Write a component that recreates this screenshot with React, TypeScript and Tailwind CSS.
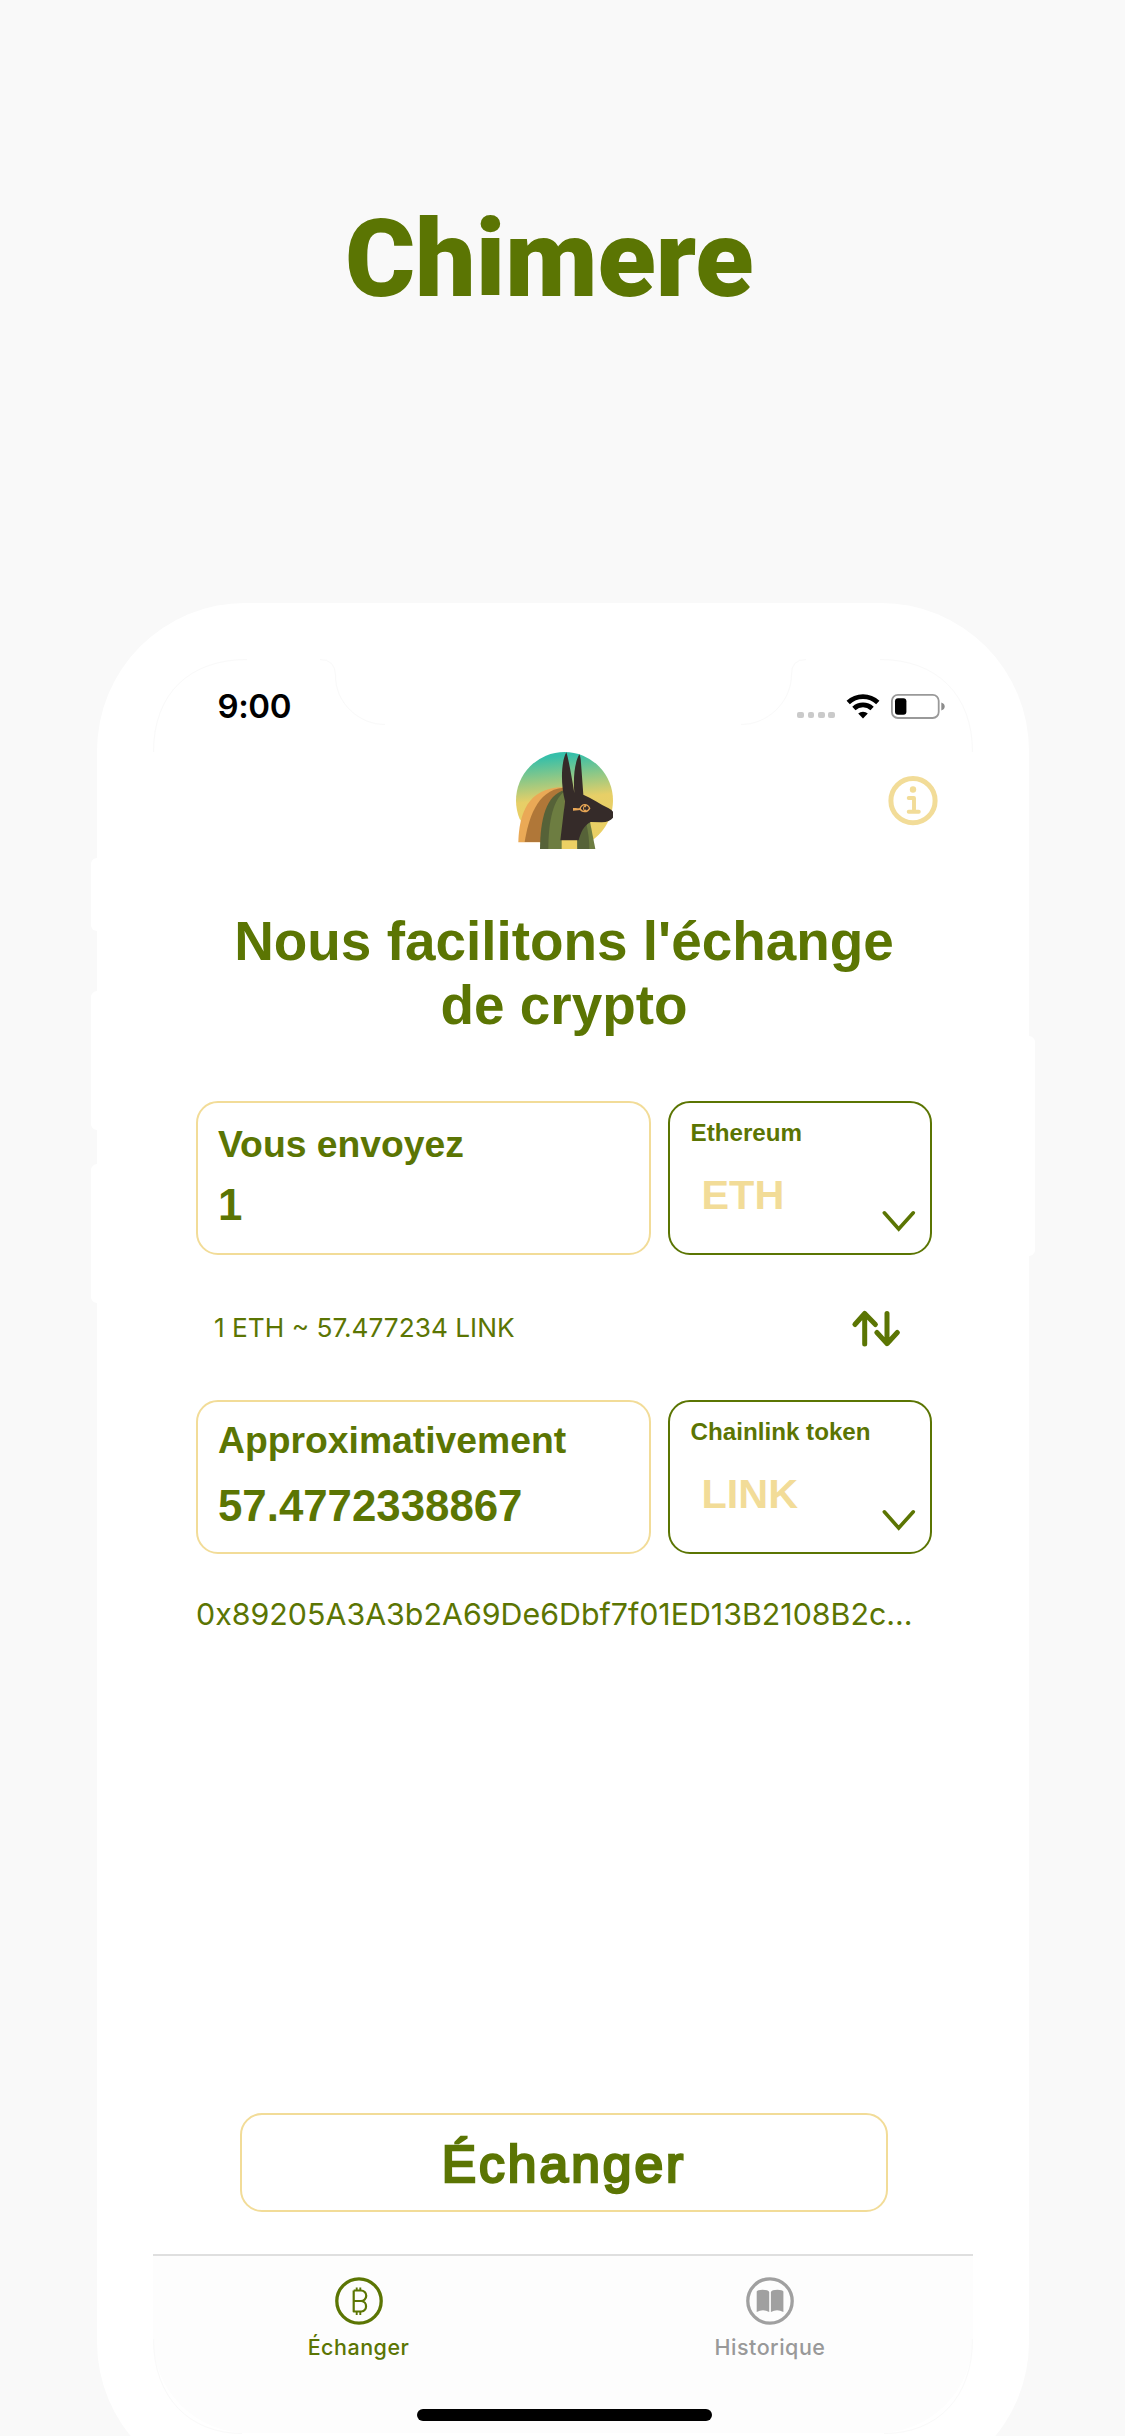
import React from "react";

function PhoneOutline() {
  return (
    <svg className="pointer-events-none absolute left-0 top-0 z-10" width="932" height="1833" viewBox="0 0 932 1833" fill="none" stroke="#f9f9f9" strokeWidth="1">
      <path d="M56.5 149 C56.5 90 93 56.5 150 56.5" />
      <path d="M223 56.5 Q238 56.5 238.500 72 C238 100 262 121.500 288 121.500" />
      <path d="M644 121.500 C670 121.500 694 100 694.500 72 Q694 56.500 709 56.500" />
      <path d="M783 56.500 C840 56.500 875.500 92 875.500 149" />
      <path d="M56.500 1736 C56.500 1795 93 1830.500 145 1830.500" />
      <path d="M787 1830.500 C840 1830.500 875.500 1795 875.500 1736" />
    </svg>
  );
}

function Wifi() {
  return (
    <svg width="34" height="26" viewBox="0 0 34 26" fill="none" stroke="#000" strokeWidth="4.800">
      <path d="M2.200 9.600 A21.500 21.500 0 0 1 31.800 9.600" />
      <path d="M7.900 15.400 A13.400 13.400 0 0 1 26.100 15.400" />
      <path d="M17 25.400 L12.200 20.600 A7 7 0 0 1 21.800 20.600 Z" fill="#000" stroke="none" />
    </svg>
  );
}

function Battery() {
  return (
    <svg width="54" height="26" viewBox="0 0 54 26">
      <rect x="0.900" y="1.800" width="46.800" height="23.200" rx="6" fill="none" stroke="#999" strokeWidth="1.800" />
      <rect x="4" y="5.200" width="11.400" height="16.500" rx="3" fill="#000" />
      <path d="M50.300 9.400 Q53.700 10.600 53.700 13.400 Q53.700 16.200 50.300 17.400 Z" fill="#8c8c8c" />
    </svg>
  );
}

function Logo() {
  return (
    <svg width="97" height="97" viewBox="48 37 291 291">
      <defs>
        <linearGradient id="sky" x1="0.450" y1="0" x2="0.550" y2="1">
          <stop offset="0.040" stopColor="#36bfa9" />
          <stop offset="0.260" stopColor="#8fc886" />
          <stop offset="0.480" stopColor="#e7cf67" />
          <stop offset="1" stopColor="#ecd064" />
        </linearGradient>
      </defs>
      <circle cx="193.500" cy="182.500" r="145.500" fill="url(#sky)" />
      <path d="M48 240 L62 240 L55 310 L122 310 L122 328 L48 328 Z" fill="#fff" />
      <path d="M55 308 C57 225 82 143 190 143 L195 160 L124 308 Z" fill="#eaa956" />
      <path d="M74 307 C84 245 108 150 190 144 L195 160 L124 307 Z" fill="#b07738" />
      <path d="M120 328 C121 240 137 165 195 151 L190 328 Z" fill="#566238" />
      <path d="M145 328 C145 245 160 178 195 155 L186 328 Z" fill="#6d7d41" />
      <path d="M185 300 L232 300 L232 328 L185 328 Z" fill="#ecd064" />
      <path d="M232 328 L232 295 L262 246 L270 246 L286 328 Z" fill="#6d7d41" />
      <path d="M232 328 L232 295 L258 248 Q268 290 268 328 Z" fill="#566238" />
      <path d="M199 38 C185 62 180 125 195 185 L181 302 L236 302 C242 280 250 258 272 247 L305 248 Q330 246 339 234 L339 216 Q336 211 326 206 C300 193 275 176 250 165 L243 70 Q242 50 238 44 C225 66 219 110 223 160 C214 105 206 60 199 38 Z" fill="#352b29" />
      <path d="M219 205 L228 205 Q236 207 242 204 L242 211 L219 213 Z" fill="#e7a655" />
      <path d="M240 207 C246 191 262 191 269 206 C262 219 246 219 240 207 Z" fill="none" stroke="#e7a655" strokeWidth="4" />
      <path d="M254 196 Q244 206 254 216 L259 216 Q256 206 259 196 Z" fill="#e7a655" />
      <ellipse cx="255" cy="206" rx="3" ry="5" fill="#352b29" />
    </svg>
  );
}

function InfoIcon() {
  return (
    <svg width="50" height="50" viewBox="0 0 50 50" fill="none" stroke="#f2dc98" strokeLinecap="round" strokeLinejoin="round">
      <circle cx="25" cy="24.700" r="22.100" strokeWidth="5" />
      <circle cx="25" cy="13.500" r="3.200" fill="#f2dc98" stroke="none" />
      <path d="M20.700 22 H26 V35.700 M20.700 35.700 H30.800" strokeWidth="3.900" />
    </svg>
  );
}

function Chevron() {
  return (
    <svg className="absolute left-[212px] top-[107px]" width="34" height="22" viewBox="0 0 34 22" fill="none" stroke="#5b7503" strokeWidth="3.600" strokeLinecap="round">
      <path d="M2.300 2.800 L16.700 19 L31.300 2.800" />
    </svg>
  );
}

function SwapIcon() {
  return (
    <svg className="-mt-[2px]" width="52" height="40" viewBox="0 0 52 40" fill="none" stroke="#5b7503" strokeWidth="5" strokeLinecap="round" strokeLinejoin="round">
      <path d="M14.700 37 V6.500 M4.900 17.500 L14.700 6.500 L25.400 17.500" />
      <path d="M37 6.500 V36.500 M26.900 25.500 L37 36.700 L47.300 25.500" />
    </svg>
  );
}

function BitcoinIcon() {
  return (
    <svg width="48" height="48" viewBox="0 0 48 48" fill="none" stroke="#5b7503">
      <circle cx="24" cy="24" r="22.200" strokeWidth="3.300" />
      <path d="M18.700 13.500 V34.500 H26.500 A5.300 5.300 0 0 0 26.500 24 H18.700 M26 24 A5.200 5.200 0 0 0 26 13.500 H18.700" strokeWidth="2.200" strokeLinejoin="round" />
      <path d="M21.700 10.500 V13.500 M25.300 10.500 V13.500 M21.700 34.500 V38 M25.300 34.500 V38" strokeWidth="1.900" />
    </svg>
  );
}

function BookIcon() {
  return (
    <svg width="48" height="48" viewBox="0 0 48 48">
      <circle cx="24" cy="24" r="22.200" fill="none" stroke="#a0a0a0" strokeWidth="3.300" />
      <path d="M10.700 14.500 Q11.500 12.800 16.500 12.700 Q22.300 12.700 23.200 15 V35 Q17 31.500 10.700 35 Z" fill="#a0a0a0" />
      <path d="M24.900 15 Q25.800 12.700 31.500 12.700 Q36.500 12.800 37.400 14.500 V35 Q31 31.500 24.900 35 Z" fill="#a0a0a0" />
    </svg>
  );
}

type FieldProps = { label: string; value: string; labelClass: string; valueClass: string };

function AmountCard({ label, value, labelClass, valueClass }: FieldProps) {
  return (
    <div className="flex h-full w-[455px] flex-col rounded-[22px] border-2 border-[#f2dc98] pl-5">
      <div className={"h-[42px] text-[37.3px] leading-[42px] " + labelClass}>{label}</div>
      <div className={"h-[50px] text-[43.8px] leading-[50px] " + valueClass}>{value}</div>
    </div>
  );
}

function TokenCard({ name, symbol }: { name: string; symbol: string }) {
  return (
    <div className="relative h-full w-[264px] rounded-[22px] border-2 border-[#5b7503] pl-[20.500px] pt-[16px]">
      <div className="h-[28px] whitespace-nowrap text-[24.2px] leading-[28px]">{name}</div>
      <div className="ml-[11px] mt-6 h-12 text-[41.400px] leading-[48px] text-[#f2dc98]">{symbol}</div>
      <Chevron />
    </div>
  );
}

export default function App() {
  return (
    <div className="h-[2436px] w-[1125px] overflow-hidden bg-[#f9f9f9] font-['Liberation_Sans',sans-serif] text-[#5b7503]">
      <header className="h-[603px] pl-[345px] pt-[200px]">
        <h1 className="font-['Roboto',sans-serif] text-[107.100px] font-black leading-[120px]">Chimere</h1>
      </header>

      <div className="relative ml-[97px] h-[1887px] w-[932px] rounded-[148px] bg-white px-14 pt-14">
        <div className="absolute -left-[6px] top-[255px] h-[73px] w-3 rounded-[6px] bg-white" />
        <div className="absolute -left-[6px] top-[388px] h-[139px] w-3 rounded-[6px] bg-white" />
        <div className="absolute -left-[6px] top-[561px] h-[139px] w-3 rounded-[6px] bg-white" />
        <div className="absolute -right-[6px] top-[433px] h-[220px] w-3 rounded-[6px] bg-white" />
        <PhoneOutline />

        <div className="flex h-[1774px] flex-col overflow-hidden rounded-b-[95px]">
          <div className="mt-[27px] flex h-10 items-center justify-between pl-[64.500px] pr-[28px]">
            <span className="font-['Inter',sans-serif] text-[33px] font-semibold leading-[40px] tracking-[-0.400px] text-black">9:00</span>
            <div className="flex items-center">
              <div className="mr-[11px] flex gap-[3.400px] pt-[18px]">
                <i className="size-[6.900px] rounded-[2px] bg-[#cacaca]" />
                <i className="size-[6.900px] rounded-[2px] bg-[#cacaca]" />
                <i className="size-[6.900px] rounded-[2px] bg-[#cacaca]" />
                <i className="size-[6.900px] rounded-[2px] bg-[#cacaca]" />
              </div>
              <Wifi />
              <div className="w-[11px]" />
              <Battery />
            </div>
          </div>

          <div className="mt-[26px] flex h-[97px] items-center pl-[363px]">
            <Logo />
            <div className="w-[275px]" />
            <InfoIcon />
          </div>

          <h2 className="mt-[61px] pl-[2px] text-center text-[54.900px] font-bold leading-[63.500px]">
            Nous facilitons l'échange
            <br />
            de crypto
          </h2>

          <div className="ml-[43px] mt-[64px] flex h-[154px] gap-[17px] font-bold">
            <AmountCard label="Vous envoyez" value="1" labelClass="mt-[20px]" valueClass="mt-[15px]" />
            <TokenCard name="Ethereum" symbol="ETH" />
          </div>

          <div className="flex h-[145px] items-center justify-between pl-[61px] pr-[71px]">
            <span className="font-['Inter',sans-serif] text-[26.250px] leading-[30px]">1 ETH ~ 57.477234 LINK</span>
            <SwapIcon />
          </div>

          <div className="ml-[43px] flex h-[154px] gap-[17px] font-bold">
            <AmountCard label="Approximativement" value="57.4772338867" labelClass="mt-[17px]" valueClass="mt-[20px]" />
            <TokenCard name="Chainlink token" symbol="LINK" />
          </div>

          <p className="ml-[43px] mt-[42px] h-9 whitespace-nowrap font-['Inter',sans-serif] text-[30.370px] leading-[36px]">
            0x89205A3A3b2A69De6Dbf7f01ED13B2108B2c...
          </p>

          <button className="ml-[87px] mt-[481px] h-[99px] w-[648px] rounded-[22px] border-2 border-[#f2dc98] pt-[2px] text-[51.500px] leading-[60px] tracking-[3px] [-webkit-text-stroke:2.600px_#5b7503] [stroke-linejoin:round]">
            Échanger
          </button>

          <nav className="mt-[42px] flex-1 border-t-2 border-[#dfdfdf] bg-[#fdfdfd] font-['Inter',sans-serif] text-[21.500px] font-medium leading-[26px] tracking-[0.500px]">
            <div className="flex pt-[21px]">
              <div className="flex w-[411px] shrink-0 flex-col items-center gap-[9px]">
                <BitcoinIcon />
                <span>Échanger</span>
              </div>
              <div className="flex w-[412px] shrink-0 flex-col items-center gap-[9px] text-[#999]">
                <BookIcon />
                <span>Historique</span>
              </div>
            </div>
            <div className="ml-[264px] mt-[49px] h-[12px] w-[295px] rounded-full bg-black" />
          </nav>
        </div>
      </div>
    </div>
  );
}
